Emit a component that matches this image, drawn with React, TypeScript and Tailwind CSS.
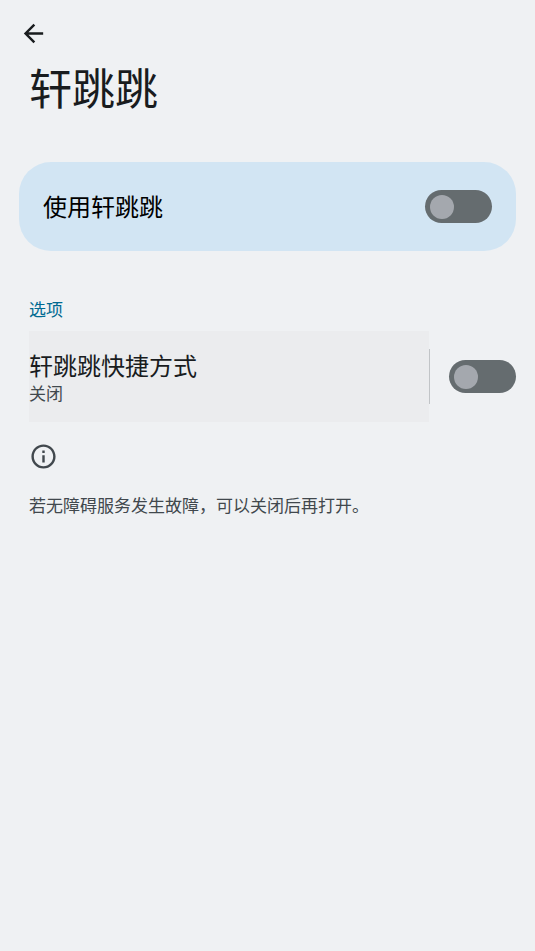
import { useState } from "react"

type SwitchProps = {
  id: string
  label?: string
  checked: boolean
  onChange: (checked: boolean) => void
}

const Switch = ({ id, label, checked, onChange }: SwitchProps) => (
  <input
    id={id}
    type="checkbox"
    role="switch"
    aria-label={label}
    checked={checked}
    onChange={(e) => onChange(e.target.checked)}
    className="flex h-[33px] w-[67px] shrink-0 cursor-pointer appearance-none items-center rounded-full bg-[#656c6f] px-[5px] before:block before:size-6 before:rounded-full before:bg-[#a4a8ae] checked:justify-end checked:bg-[#00658b] checked:before:bg-white"
  />
)

const App = () => {
  const [enabled, setEnabled] = useState(false)
  const [shortcut, setShortcut] = useState(false)

  return (
    <main className="min-h-screen bg-[#eff1f3] px-[19px] pt-[19px] font-['Noto_Sans_CJK_SC',sans-serif] text-[#191c1e]">
      <header>
        <button type="button" aria-label="返回" className="block cursor-pointer">
          <svg viewBox="0 0 24 24" className="size-[29px]" fill="currentColor" aria-hidden="true">
            <path d="M20 11H7.83l5.59-5.59L12 4l-8 8 8 8 1.41-1.41L7.83 13H20v-2z" />
          </svg>
        </button>
        <h1 className="mt-1.5 px-[10px] text-[43px] leading-[64px]">轩跳跳</h1>
      </header>

      {/* Main switch */}
      <section className="mt-11 flex h-[89px] items-center justify-between rounded-[32px] bg-[#d2e5f3] px-6 text-black">
        <label htmlFor="service" className="cursor-pointer pb-0.5 text-2xl">
          使用轩跳跳
        </label>
        <Switch id="service" checked={enabled} onChange={setEnabled} />
      </section>

      {/* Options */}
      <section className="mt-[46px] pl-[10px]">
        <h2 className="text-[17px] leading-6 text-[#006a91]">选项</h2>
        <div className="mt-[10px] flex items-center">
          <button
            type="button"
            className="h-[91px] flex-1 cursor-pointer bg-[#ebecee] text-left"
          >
            <span className="block text-2xl leading-8">轩跳跳快捷方式</span>
            <span className="block text-[17px] leading-6 text-[#41484d]">
              {shortcut ? "开启" : "关闭"}
            </span>
          </button>
          <div className="mr-[19px] h-[55px] w-px bg-[#c1c4c7]" />
          <Switch id="shortcut" label="轩跳跳快捷方式" checked={shortcut} onChange={setShortcut} />
        </div>
      </section>

      {/* Footer note */}
      <footer className="mt-5 px-[10px] text-[#41484d]">
        <svg viewBox="0 0 24 24" className="size-[29px]" fill="currentColor" aria-hidden="true">
          <path d="M11 7h2v2h-2zm0 4h2v6h-2zm1-9C6.48 2 2 6.48 2 12s4.48 10 10 10 10-4.48 10-10S17.52 2 12 2zm0 18c-4.41 0-8-3.59-8-8s3.59-8 8-8 8 3.59 8 8-3.59 8-8 8z" />
        </svg>
        <p className="mt-[22px] text-[17px] leading-6">若无障碍服务发生故障，可以关闭后再打开。</p>
      </footer>
    </main>
  )
}

export default App
